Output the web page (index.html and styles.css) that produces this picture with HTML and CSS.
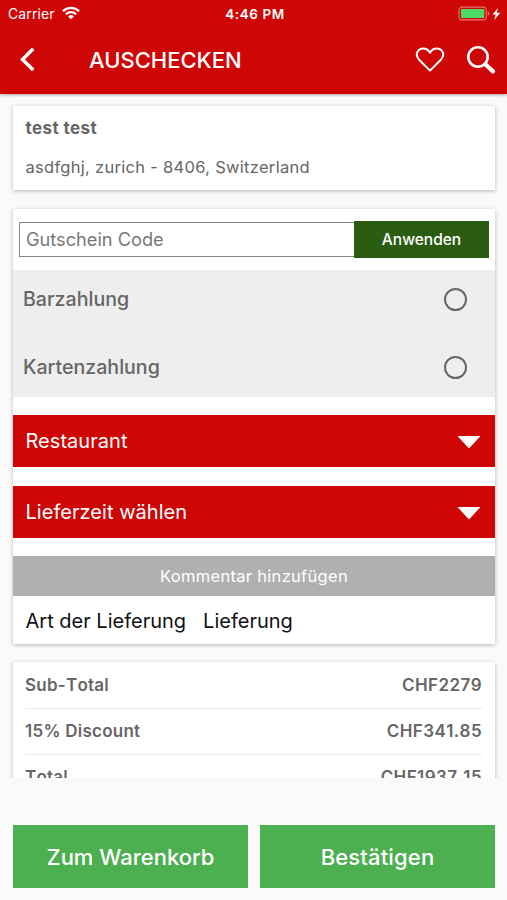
FILE: index.html
```html
<!DOCTYPE html>
<html lang="de">
<head>
<meta charset="utf-8">
<title>Auschecken</title>
<link rel="stylesheet" href="styles.css">
</head>
<body>
<div class="app">
  <header class="header">
    <div class="status">
      <div class="status-left"><span class="carrier">Carrier</span>
        <svg class="wifi" width="18" height="14" viewBox="0 0 18 14"><g fill="none" stroke="#fff" stroke-width="2.300"><path d="M1 5.2a11.3 11.3 0 0 1 16 0"/><path d="M3.9 8.3a7.2 7.2 0 0 1 10.2 0"/></g><path d="M6.1 10.4a4.1 4.1 0 0 1 5.8 0L9 13.3z" fill="#fff"/></svg>
      </div>
      <span class="time">4:46 PM</span>
      <div class="status-right">
        <svg width="44" height="16" viewBox="0 0 44 16"><rect x=".9" y="1.1" width="27.4" height="12.8" rx="3.4" fill="none" stroke="#e97373" stroke-width="1.1"/><rect x="2.9" y="3.1" width="23.4" height="8.8" rx="1" fill="#4cd964"/><path d="M29.8 5.5c2 .6 2 3.4 0 4z" fill="#e97373"/><path d="M40 2 34.500 8.600h3.200l-1.500 5.400 6.200-7.300h-3.500z" fill="#fff"/></svg>
      </div>
    </div>
    <div class="nav">
      <svg class="back" width="16" height="26" viewBox="0 0 16 26"><path d="M14.2 1.700 3.500 12.400l10.700 10.700" fill="none" stroke="#fff" stroke-width="3.5"/></svg>
      <h1 class="title">AUSCHECKEN</h1>
      <svg class="heart" width="30" height="26" viewBox="0 0 30 26"><path d="M15 23.6 4.1 12.7C-1.1 6.8 3.5 1.6 8.3 1.6c3.1 0 5.2 1.8 6.7 4 1.500-2.200 3.600-4 6.700-4 4.800 0 9.400 5.200 4.200 11.100z" fill="none" stroke="#fff" stroke-width="2" stroke-linejoin="round"/></svg>
      <svg class="search" width="30" height="30" viewBox="0 0 30 30"><circle cx="12" cy="12" r="9.700" fill="none" stroke="#fff" stroke-width="2.600"/><path d="m19.300 19.200 7.700 7.200" stroke="#fff" stroke-width="4.200" stroke-linecap="round"/></svg>
    </div>
  </header>

  <main class="content">
    <section class="card address">
      <div class="name">test test</div>
      <div class="street">asdfghj, zurich - 8406, Switzerland</div>
    </section>

    <section class="card order">
      <div class="coupon">
        <input class="coupon-input" type="text" placeholder="Gutschein Code">
        <button class="coupon-apply">Anwenden</button>
      </div>
      <div class="payments">
        <div class="payment"><span class="cash">Barzahlung</span><i class="radio"></i></div>
        <div class="payment"><span class="credit">Kartenzahlung</span><i class="radio"></i></div>
      </div>
      <div class="select"><span class="restaurant">Restaurant</span><i class="caret"></i></div>
      <div class="select"><span class="slot">Lieferzeit wählen</span><i class="caret"></i></div>
      <button class="comment"><span>Kommentar hinzufügen</span></button>
      <div class="delivery"><span class="kind">Art der Lieferung</span><span class="value">Lieferung</span></div>
    </section>

    <section class="card totals">
      <div class="line"><span>Sub-Total</span><span>CHF2279</span></div>
      <div class="line"><span>15% Discount</span><span>CHF341.85</span></div>
      <div class="line"><span>Total</span><span>CHF1937.15</span></div>
    </section>
  </main>

  <footer class="actions">
    <button class="action"><span class="cart">Zum Warenkorb</span></button>
    <button class="action"><span class="confirm">Bestätigen</span></button>
  </footer>
</div>
</body>
</html>
```
FILE: styles.css
```css
* { box-sizing: border-box; }
body { margin: 0; background: #fafafa; font-family: Inter, "Liberation Sans", sans-serif; color: #666; }
button { border: 0; padding: 0; font: inherit; color: #fff; }
svg { display: block; flex: none; }
.app { height: 900px; display: flex; flex-direction: column; overflow: hidden; }

.header { flex: none; height: 94px; background: #cf0606; color: #fff; box-shadow: 0 1px 3px rgba(0,0,0,.35); }
.status { height: 27px; display: grid; grid-template-columns: 1fr auto 1fr; align-items: center; padding: 0 5px 0 8px; }
.status-left { display: flex; align-items: center; gap: 7px; font-size: 14px; letter-spacing: .1px; }
.wifi { margin-top: -2px; }
.time { font-size: 13.500px; font-weight: 600; letter-spacing: .6px; }
.status-right { display: flex; justify-content: flex-end; }
.nav { height: 66px; display: flex; align-items: center; padding: 0 11px 0 19px; }
.title { margin: 0 auto 0 54px; font-size: 22px; font-weight: 500; line-height: 30px; }
.heart { margin-right: 21px; }

.content { flex: none; height: 684px; padding: 12px 12px 0 13px; overflow: hidden; }
.card { background: #fff; box-shadow: 0 1px 4px rgba(0,0,0,.28); }
.address { height: 84px; padding: 12px 12px 12px 12.500px; margin-bottom: 19px; }
.name { font-size: 17px; font-weight: 700; line-height: 20px; letter-spacing: .42px; }
.street { font-size: 16.500px; line-height: 20px; margin-top: 19px; letter-spacing: .29px; }

.order { height: 435px; margin-bottom: 18px; }
.coupon { display: flex; align-items: center; height: 61px; padding: 0 6px 1px 6px; }
.coupon-input { flex: 1; min-width: 0; height: 35px; border: 1px solid #858585; border-right: 0; border-radius: 0; padding: 0 6px; font: 18.200px Inter, sans-serif; }
.coupon-input::placeholder { color: #777; }
.coupon-apply { width: 135px; height: 37px; background: #2a5c11; font-size: 15.500px; font-weight: 500; }
.payments { height: 127px; background: #eee; margin-bottom: 18px; }
.payment { height: 68px; display: flex; align-items: center; justify-content: space-between; padding: 0 28px 10px 10px; font-size: 19.600px; font-weight: 500; }
.radio { width: 23px; height: 23px; border: 2.400px solid #666; border-radius: 50%; }
.select { height: 52px; margin-bottom: 19px; display: flex; align-items: center; justify-content: space-between; padding: 0 14px 0 12.500px; background: #cf0606; color: #fff; font-size: 20px; letter-spacing: .04px; }
.select + .comment { margin-top: -1px; }
.caret { width: 24px; height: 13px; background: #fff; clip-path: polygon(0 0, 100% 0, 50% 100%); margin-top: 2px; }
.comment { display: block; width: 100%; height: 40px; background: #b0b0b0; font-size: 16.500px; letter-spacing: .3px; }
.delivery { height: 48px; display: flex; align-items: center; gap: 17px; padding: 1px 12px 0 12.500px; color: #111; font-size: 20px; }

.totals { padding: 0 13px 0 12px; height: 140px; }
.line { height: 46px; display: flex; align-items: center; justify-content: space-between; border-bottom: 1px solid #e9e9e9; padding-bottom: 2px; font-size: 17px; font-weight: 600; letter-spacing: .42px; font-kerning: none; }
.line:first-child { height: 47px; padding-bottom: 1px; }
.line span:first-child { letter-spacing: .25px; }

.actions { margin-top: 47px; display: flex; gap: 12px; padding: 0 12px 0 13px; }
.action { flex: 1; height: 63px; background: #4caf50; font-size: 22px; font-weight: 500; }
.confirm { letter-spacing: .15px; }
```
